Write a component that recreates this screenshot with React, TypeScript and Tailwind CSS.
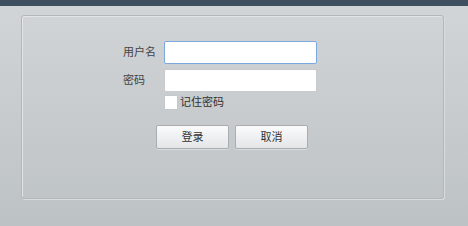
import React, { useState } from 'react'

const font = { fontFamily: '"Liberation Sans", "Noto Sans CJK SC", sans-serif' }

const App: React.FC = () => {
  const [remember, setRemember] = useState(false)

  return (
    <div className="w-[468px] h-[226px] bg-gradient-to-b from-[#d2d5d8] to-[#bdc2c5] text-[#333]" style={font}>
      <div className="h-[6px] bg-[#3e4f60]"></div>
      <div className="pt-[9px] pl-[21px]">
        <div className="w-[423px] h-[184px] rounded-[3px] border border-[#b3b7ba] shadow-[inset_1px_1px_0_#e2e4e6,1px_1px_0_#d9dcde]">
          <div className="pt-[25px] pl-[101px]">
            <div className="flex items-center h-[23px]">
              <label className="w-[41px] text-[11px] leading-none text-[#444]">用户名</label>
              <input
                autoFocus
                className="w-[153px] h-[23px] bg-white border border-[#7ba9dd] rounded-[2px] px-[6px] text-[12px] outline-none caret-black"
              />
            </div>
            <div className="flex items-center h-[23px] mt-[5px]">
              <label className="w-[41px] text-[11px] leading-none text-[#444]">密码</label>
              <input
                type="password"
                className="w-[153px] h-[23px] bg-white border border-[#c9cccf] rounded-[2px] px-[6px] text-[12px] outline-none"
              />
            </div>
            <label className="flex items-center ml-[41px] mt-[3px] h-[15px]">
              <span
                onClick={() => setRemember(!remember)}
                className="w-[14px] h-[15px] bg-white border border-[#c4c8cb] flex items-center justify-center text-[10px]"
              >
                {remember ? '✓' : ''}
              </span>
              <span className="ml-[2px] text-[11px] leading-none text-[#333]">记住密码</span>
            </label>
            <div className="flex gap-[6px] ml-[33px] mt-[15px]">
              <button className="w-[73px] h-[24px] rounded-[2px] border border-[#a9adb0] bg-gradient-to-b from-[#fbfbfc] to-[#e3e5e7] text-[11px] text-[#333] shadow-[0_1px_0_#d8dbdd]">
                登录
              </button>
              <button className="w-[73px] h-[24px] rounded-[2px] border border-[#a9adb0] bg-gradient-to-b from-[#fbfbfc] to-[#e3e5e7] text-[11px] text-[#333] shadow-[0_1px_0_#d8dbdd]">
                取消
              </button>
            </div>
          </div>
        </div>
      </div>
    </div>
  )
}

export default App
